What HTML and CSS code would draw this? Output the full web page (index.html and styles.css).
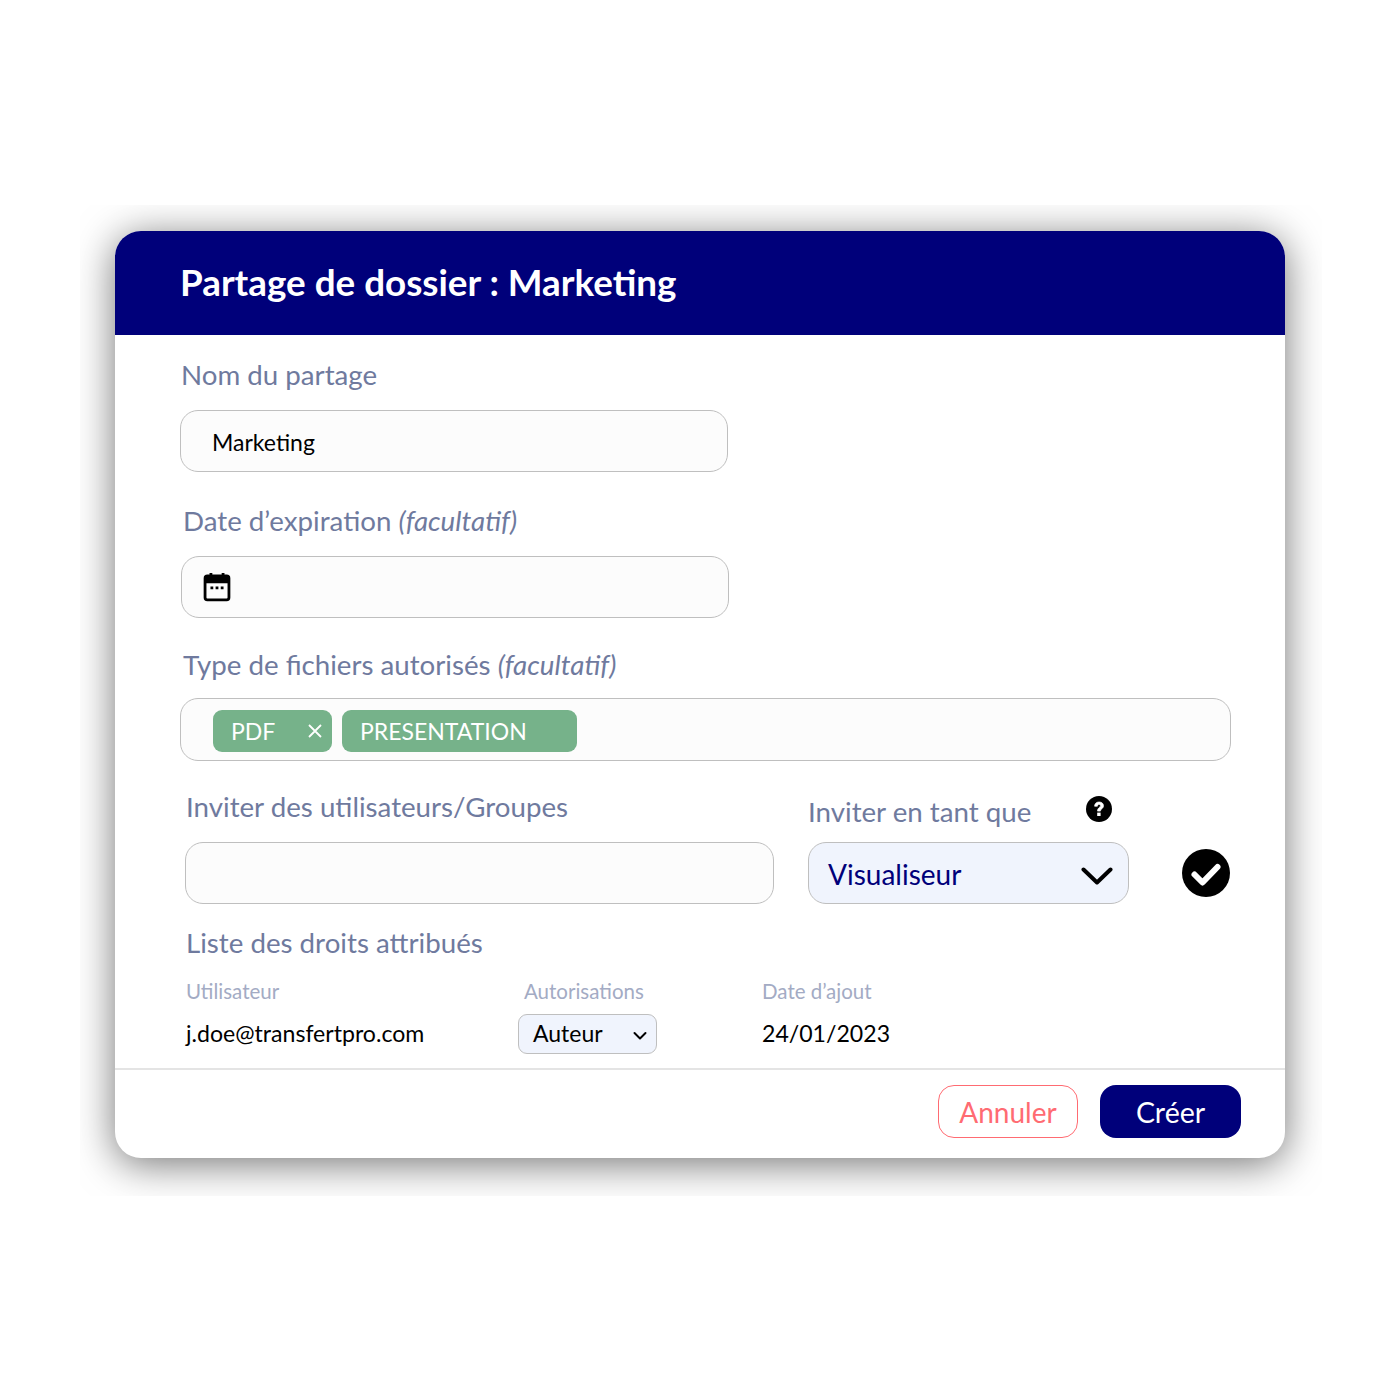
FILE: index.html
```html
<!DOCTYPE html>
<html lang="fr">
<head>
    <meta charset="UTF-8">
    <meta name="viewport" content="width=device-width, initial-scale=1.0">
    <title>Partage de dossier</title>
    <link rel="stylesheet" href="styles.css">
</head>
<body>
    <div class="stage">
        <section class="dialog">
            <header class="dialog-header">
                <h1>Partage de dossier : Marketing</h1>
            </header>

            <div class="dialog-body">
                <label class="label label-name">Nom du partage</label>
                <div class="field field-name">Marketing</div>

                <label class="label label-date">Date d’expiration <em>(facultatif)</em></label>
                <div class="field field-date">
                    <svg class="icon-calendar" viewBox="0 0 30 32" width="28" height="30">
                        <path d="M7 1h3v4H7zM20 1h3v4h-3z" fill="#000"/>
                        <rect x="2.2" y="4.2" width="25.6" height="25.6" rx="2.5" fill="none" stroke="#000" stroke-width="3"/>
                        <path d="M2 5h26v7H2z" fill="#000"/>
                        <path d="M8 15.5h3v3H8zM13.5 15.5h3v3h-3zM19 15.5h3v3h-3z" fill="#000"/>
                    </svg>
                </div>

                <label class="label label-type">Type de fichiers autorisés <em>(facultatif)</em></label>
                <div class="field field-type">
                    <span class="tag tag-pdf">PDF
                        <svg viewBox="0 0 14 14" width="14" height="14"><path d="M1 1l12 12M13 1L1 13" stroke="#fff" stroke-width="1.8" fill="none"/></svg>
                    </span>
                    <span class="tag tag-presentation">PRESENTATION</span>
                </div>

                <div class="invite">
                    <div class="invite-user">
                        <label class="label">Inviter des utilisateurs/Groupes</label>
                        <div class="field field-user"></div>
                    </div>
                    <div class="invite-role">
                        <div class="role-head">
                            <label class="label">Inviter en tant que</label>
                            <svg class="icon-help" viewBox="0 0 26 26" width="26" height="26">
                                <circle cx="13" cy="13" r="13" fill="#000"/>
                                <path d="M8.6 10.2c0-2.6 2-4.2 4.500-4.200s4.400 1.500 4.400 3.700c0 3-3.100 3-3.100 5.400h-2.900c0-3.500 3-3.700 3-5.200 0-.9-.6-1.400-1.500-1.400-1 0-1.500.7-1.600 1.700z" fill="#fff" stroke="#fff" stroke-width=".7"/>
                                <rect x="11.2" y="16.6" width="3.4" height="3.4" fill="#fff"/>
                            </svg>
                        </div>
                        <div class="select select-role">
                            Visualiseur
                            <svg viewBox="0 0 32 20" width="32" height="20"><path d="M2.500 3.500l13.500 13L29.500 3.500" fill="none" stroke="#000" stroke-width="4" stroke-linecap="round" stroke-linejoin="round"/></svg>
                        </div>
                    </div>
                    <svg class="icon-check" viewBox="0 0 48 48" width="48" height="48">
                        <circle cx="24" cy="24" r="24" fill="#000"/>
                        <path d="M12.500 25.500l8 8 15-15.500" fill="none" stroke="#fff" stroke-width="6" stroke-linecap="round" stroke-linejoin="round"/>
                    </svg>
                </div>

                <label class="label label-list">Liste des droits attribués</label>

                <div class="rights rights-head">
                    <span>Utilisateur</span>
                    <span>Autorisations</span>
                    <span>Date d’ajout</span>
                </div>
                <div class="rights rights-row">
                    <span>j.doe@transfertpro.com</span>
                    <div class="select select-small">
                        Auteur
                        <svg viewBox="0 0 14 10" width="14" height="10"><path d="M1.500 2l5.500 5.500L12.500 2" fill="none" stroke="#000" stroke-width="2" stroke-linecap="round" stroke-linejoin="round"/></svg>
                    </div>
                    <span>24/01/2023</span>
                </div>
            </div>

            <footer class="dialog-footer">
                <button type="button" class="btn btn-cancel">Annuler</button>
                <button type="button" class="btn btn-create">Créer</button>
            </footer>
        </section>
    </div>
</body>
</html>
```

FILE: styles.css
```css
:root {
    --navy: #00007a;
    --label: #6f7a9e;
    --label-light: #a3abc4;
    --border: #bfbfbf;
    --field-bg: #fcfcfc;
    --select-bg: #f0f4fd;
    --green: #76b28a;
    --red: #ff6b72;
}

* {
    margin: 0;
    padding: 0;
    box-sizing: border-box;
}

body {
    font-family: 'Lato', sans-serif;
    background: #fff;
    color: #000;
}

/* the shadow is cut off by this box, as in the picture */
.stage {
    width: 1242px;
    height: 991px;
    margin: 205px 0 0 80px;
    padding: 26px 37px 38px 35px;
    overflow: hidden;
}

.dialog {
    height: 927px;
    background: #fff;
    border-radius: 26px;
    overflow: hidden;
    box-shadow: 0 6px 40px rgba(0, 0, 0, 0.55);
    display: flex;
    flex-direction: column;
}

.dialog-header {
    height: 104px;
    background: var(--navy);
    padding-left: 65px;
    display: flex;
    align-items: center;
    flex: none;
}

.dialog-header h1 {
    font-size: 36.800px;
    font-weight: 700;
    color: #fff;
    line-height: 44px;
    margin-bottom: 2px;
}

.dialog-body {
    flex: 1;
    padding: 23px 0 0 65px;
}

.label {
    display: block;
    font-size: 27.700px;
    line-height: 34px;
    color: var(--label);
}

.label em {
    font-style: italic;
}

.label-name {
    margin-left: 1px;
}

.label-date {
    margin: 32px 0 0 3px;
}

.label-type {
    margin: 30px 0 0 3px;
}

.label-list {
    margin: 22px 0 0 6px;
}

.field {
    height: 62px;
    border: 1.500px solid var(--border);
    border-radius: 18px;
    background: var(--field-bg);
    display: flex;
    align-items: center;
}

.field-name {
    width: 548px;
    margin-top: 18px;
    padding: 2px 0 0 31px;
    font-size: 23px;
}

.field-date {
    width: 548px;
    margin: 18px 0 0 1px;
    padding-left: 21px;
}

.field-type {
    width: 1051px;
    height: 63px;
    margin-top: 16px;
    padding: 2px 0 0 32px;
    gap: 10px;
}

.tag {
    height: 42px;
    border-radius: 9px;
    background: var(--green);
    color: #fff;
    font-size: 23px;
    display: flex;
    align-items: center;
    padding-left: 18px;
}

.tag-pdf {
    width: 119px;
    justify-content: space-between;
    padding-right: 10px;
}

.tag-presentation {
    width: 235px;
}

.invite {
    display: flex;
    align-items: flex-end;
    margin: 29px 0 0 5px;
}

.invite-user {
    width: 589px;
}

.invite-user .label {
    margin-left: 1px;
    margin-bottom: 18px;
}

.field-user {
    width: 589px;
}

.invite-role {
    width: 321px;
    margin-left: 34px;
}

.role-head {
    display: flex;
    align-items: flex-start;
    height: 52px;
}

.role-head .label {
    margin-top: 5px;
    width: 278px;
}

.icon-help {
    margin-top: 6px;
}

.select {
    display: flex;
    align-items: center;
    justify-content: space-between;
    background: var(--select-bg);
    border: 1.500px solid var(--border);
}

.select-role {
    height: 62px;
    border-radius: 18px;
    padding: 2px 15px 0 19px;
    font-size: 28px;
    color: var(--navy);
}

.select-role svg {
    margin-top: 4px;
}

.icon-check {
    margin: 0 0 7px 53px;
}

.rights {
    display: grid;
    grid-template-columns: 338px 238px 1fr;
    margin-left: 6px;
}

.rights-head {
    margin-top: 19px;
    font-size: 20.500px;
    line-height: 24px;
    color: var(--label-light);
}

.rights-row {
    margin-top: 11px;
    font-size: 23.100px;
    align-items: center;
    grid-template-columns: 332px 244px 1fr;
}

.rights-row > span {
    margin-top: -2px;
}

.select-small {
    width: 139px;
    height: 40px;
    border-radius: 9px;
    padding: 0 9px 2px 14px;
    font-size: 23px;
}

.select-small svg {
    margin-top: 5px;
}

.dialog-footer {
    flex: none;
    height: 90px;
    border-top: 2px solid #e4e4e4;
    padding: 15px 44px 0 0;
    display: flex;
    justify-content: flex-end;
    gap: 22px;
}

.btn {
    width: 141px;
    height: 53px;
    border-radius: 16px;
    font-family: inherit;
    font-size: 28px;
}

.btn-cancel {
    width: 140px;
    background: #fff;
    border: 1.500px solid var(--red);
    color: var(--red);
}

.btn-create {
    background: var(--navy);
    border: none;
    color: #fff;
    font-size: 28.500px;
}
```
